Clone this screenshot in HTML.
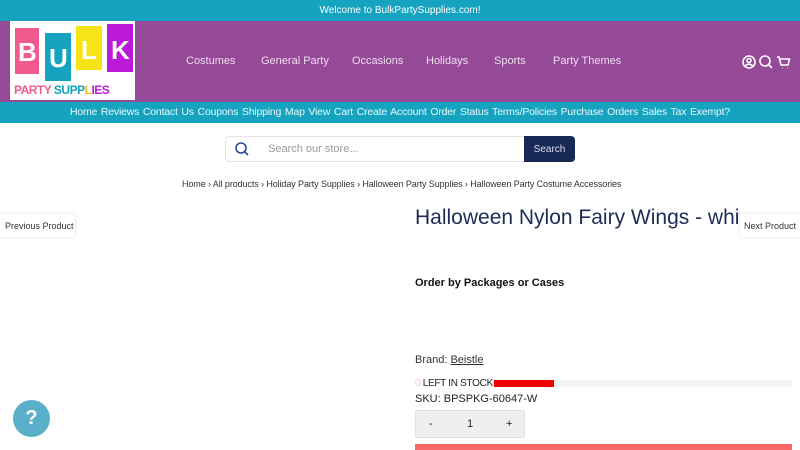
<!DOCTYPE html>
<html><head><style>
*{margin:0;padding:0;box-sizing:border-box}
body{width:800px;height:450px;overflow:hidden;background:#fff;font-family:"Liberation Sans","DejaVu Sans",sans-serif;position:relative;color:#222}
.a{position:absolute;white-space:nowrap}
</style></head><body>
<div class="a" style="left:0;top:0;width:800px;height:21px;background:#15a3bf;color:#fff;font-size:10px;text-align:center;line-height:22px">Welcome to BulkPartySupplies.com!</div>
<div class="a" style="left:0;top:21px;width:800px;height:81px;background:#954a98"></div>
<div class="a" style="left:10px;top:21px;width:125px;height:79px;background:#fff;overflow:hidden">
<div class="a" style="left:5px;top:7px;width:24px;height:46px;background:#f05a8f"></div>
<div class="a" style="left:35px;top:12px;width:26px;height:48px;background:#15a3bf"></div>
<div class="a" style="left:66px;top:5px;width:26px;height:44px;background:#f7e416"></div>
<div class="a" style="left:97px;top:3px;width:26px;height:48px;background:#bb19d8"></div>
<div class="a" style="left:8px;top:16px;color:#fff;font-weight:bold;font-size:26px">B</div>
<div class="a" style="left:39px;top:22px;color:#fff;font-weight:bold;font-size:26px">U</div>
<div class="a" style="left:71px;top:14px;color:#fff;font-weight:bold;font-size:26px">L</div>
<div class="a" style="left:101px;top:14px;color:#fff;font-weight:bold;font-size:26px">K</div>
<div class="a" style="left:4px;top:62px;font-weight:bold;font-size:12px;color:#bb19d8;letter-spacing:-0.5px"><span style="color:#f05a8f">PARTY</span> <span style="color:#15a3bf">SUPP</span><span style="color:#f7c016">L</span>IES</div>
</div>
<div class="a" style="top:55px;left:186px;color:#eedcf0;font-size:11px">Costumes</div>
<div class="a" style="top:55px;left:261px;color:#eedcf0;font-size:11px">General Party</div>
<div class="a" style="top:55px;left:352px;color:#eedcf0;font-size:11px">Occasions</div>
<div class="a" style="top:55px;left:426px;color:#eedcf0;font-size:11px">Holidays</div>
<div class="a" style="top:55px;left:494px;color:#eedcf0;font-size:11px">Sports</div>
<div class="a" style="top:55px;left:553px;color:#eedcf0;font-size:11px">Party Themes</div>
<svg class="a" style="left:742px;top:54px" width="50" height="16" fill="none" stroke="#fff" stroke-width="1.6">
<circle cx="7" cy="8" r="6"/><circle cx="7" cy="6.5" r="2"/><path d="M3 12.5c2-3 6-3 8 0"/>
<circle cx="23" cy="7" r="5"/><path d="M27 11l3 3"/>
<path d="M35 3h2l2 8h7l1.5-6H38M40 14h.5M45 14h.5"/>
</svg>
<div class="a" style="left:0;top:102px;width:800px;height:21px;background:#15a3bf;color:#eaf8fb;font-size:10.5px;text-align:center;line-height:21px;letter-spacing:-0.2px;word-spacing:1px">Home Reviews Contact Us Coupons Shipping Map View Cart Create Account Order Status Terms/Policies Purchase Orders Sales Tax Exempt?</div>
<div class="a" style="left:225px;top:136px;width:300px;height:26px;border:1px solid #e3e3e3;border-radius:4px 0 0 4px"></div>
<svg class="a" style="left:235px;top:142px" width="14" height="14" fill="none" stroke="#2a4a9a" stroke-width="1.6"><circle cx="6" cy="6" r="5"/><path d="M9.5 9.5l3.5 3.5"/></svg>
<div class="a" style="left:268px;top:143px;color:#999;font-size:11px">Search our store...</div>
<div class="a" style="left:524px;top:136px;width:51px;height:26px;background:#172a55;border-radius:0 4px 4px 0;color:#dde;font-size:10px;text-align:center;line-height:27px">Search</div>
<div class="a" style="left:182px;top:179px;font-size:9px;color:#333;letter-spacing:-0.1px">Home › All products › Holiday Party Supplies › Halloween Party Supplies › Halloween Party Costume Accessories</div>
<div class="a" style="left:0;top:214px;width:75px;height:23px;background:#fff;box-shadow:0 0 3px #ddd;font-size:9px;line-height:24px;padding-left:5px;color:#333">Previous Product</div>
<div class="a" style="left:740px;top:214px;width:60px;height:23px;background:#fff;box-shadow:0 0 3px #ddd;font-size:9px;line-height:24px;padding-left:4px;color:#333">Next Product</div>
<div class="a" style="left:415px;top:206px;font-size:21px;color:#1d2c5a;width:325px;overflow:hidden">Halloween Nylon Fairy Wings - white</div>
<div class="a" style="left:415px;top:277px;font-size:11px;font-weight:bold;color:#111">Order by Packages or Cases</div>
<div class="a" style="left:415px;top:354px;font-size:11px;color:#333">Brand: <u>Beistle</u></div>
<div class="a" style="left:415px;top:378px;font-size:10px;color:#222;letter-spacing:-0.3px"><span style="color:#fcc">0</span> LEFT IN STOCK</div>
<div class="a" style="left:494px;top:380px;width:298px;height:7px;background:#f4f4f4"></div>
<div class="a" style="left:494px;top:380px;width:60px;height:7px;background:#ee0000"></div>
<div class="a" style="left:415px;top:393px;font-size:11px;color:#222">SKU: BPSPKG-60647-W</div>
<div class="a" style="left:415px;top:410px;width:110px;height:28px;background:#efefef;border:1px solid #e0e0e0;font-size:11px;line-height:26px"><span class="a" style="left:13px">-</span><span class="a" style="left:51px">1</span><span class="a" style="left:90px">+</span></div>
<div class="a" style="left:415px;top:444px;width:377px;height:6px;background:#f86868"></div>
<div class="a" style="left:13px;top:400px;width:37px;height:37px;border-radius:50%;background:#5ab0c8;color:#fff;font-weight:bold;font-size:20px;text-align:center;line-height:37px">?</div>
</body></html>
